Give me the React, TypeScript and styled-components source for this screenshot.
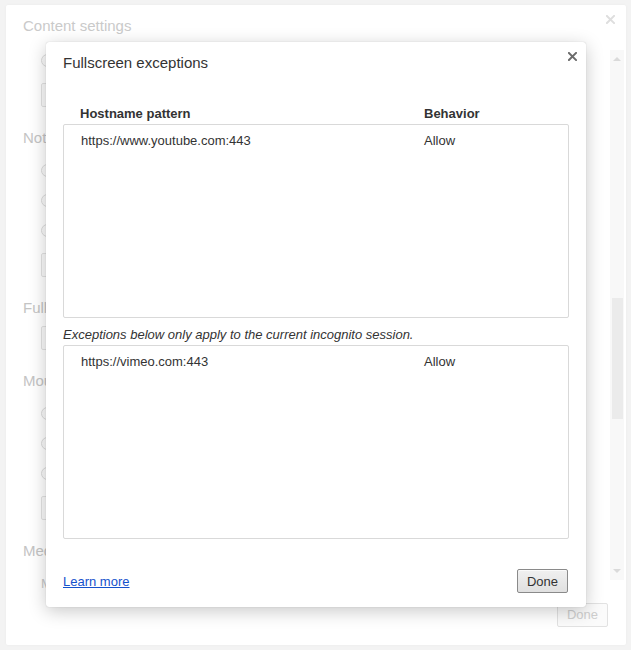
import React from "react";
import styled, { createGlobalStyle } from "styled-components";

const GlobalStyle = createGlobalStyle`
    html, body {
        margin: 0;
        padding: 0;
        background: #f2f2f2;
        font-family: "Liberation Sans", Arial, sans-serif;
    }
`;

// the settings page behind the dialog: only its left edge shows
type Section = {
    title: string;
    radios?: number;
    button?: boolean;
    line?: string;
};

const sections: Section[] = [
    { title: "Notifications", radios: 3, button: true },
    { title: "Fullscreen", button: true },
    { title: "Mouse cursor", radios: 3, button: true },
    { title: "Media", line: "Microphone:" },
];

const exceptions = [{ host: "https://www.youtube.com:443", behavior: "Allow" }];
const incognito = [{ host: "https://vimeo.com:443", behavior: "Allow" }];

function CloseIcon({ color, size }: { color: string; size: number }) {
    return (
        <svg
            width={size}
            height={size}
            viewBox="0 0 10 10"
            style={{ display: "block" }}
        >
            <path
                d="M1 1 L9 9 M9 1 L1 9"
                stroke={color}
                strokeWidth="2.2"
                strokeLinecap="square"
            />
        </svg>
    );
}

function App() {
    return (
        <>
            <GlobalStyle />
            <Page>
                <OuterDialog>
                    <OuterHeader>
                        <OuterTitle>Content settings</OuterTitle>
                        <OuterClose>
                            <CloseIcon color="#dedede" size={9} />
                        </OuterClose>
                    </OuterHeader>
                    <OuterBody>
                        <Settings>
                            <RadioRow>
                                <Radio />
                            </RadioRow>
                            <GhostButton />
                            {sections.map((s) => (
                                <React.Fragment key={s.title}>
                                    <SectionTitle>{s.title}</SectionTitle>
                                    {Array.from({ length: s.radios ?? 0 }).map(
                                        (_, i) => (
                                            <RadioRow key={i}>
                                                <Radio />
                                            </RadioRow>
                                        )
                                    )}
                                    {s.button && <GhostButton />}
                                    {s.line && <FadedLine>{s.line}</FadedLine>}
                                </React.Fragment>
                            ))}
                        </Settings>
                        <Spacer />
                        <Scrollbar>
                            <Arrow $up />
                            <Track>
                                <Thumb />
                            </Track>
                            <Arrow />
                        </Scrollbar>
                    </OuterBody>
                    <OuterFooter>
                        <DisabledButton>Done</DisabledButton>
                    </OuterFooter>
                </OuterDialog>

                <Modal>
                    <ModalClose>
                        <CloseIcon color="#6b6b6b" size={9} />
                    </ModalClose>
                    <ModalTitle>Fullscreen exceptions</ModalTitle>
                    <HeaderRow>
                        <span>Hostname pattern</span>
                        <span>Behavior</span>
                    </HeaderRow>
                    <List>
                        {exceptions.map((e) => (
                            <ListRow key={e.host}>
                                <span>{e.host}</span>
                                <span>{e.behavior}</span>
                            </ListRow>
                        ))}
                    </List>
                    <Note>
                        Exceptions below only apply to the current incognito
                        session.
                    </Note>
                    <List $tight>
                        {incognito.map((e) => (
                            <ListRow key={e.host}>
                                <span>{e.host}</span>
                                <span>{e.behavior}</span>
                            </ListRow>
                        ))}
                    </List>
                    <ModalFooter>
                        <LearnMore href="#">Learn more</LearnMore>
                        <DoneButton>Done</DoneButton>
                    </ModalFooter>
                </Modal>
            </Page>
        </>
    );
}

const Page = styled.div`
    position: relative;
    width: 631px;
    height: 650px;
    overflow: hidden;
    box-sizing: border-box;
    padding: 5px 5px 5px 6px;
    background: #f3f3f3;
`;

const OuterDialog = styled.div`
    width: 620px;
    height: 640px;
    background: #fff;
    border-radius: 2px;
    box-shadow: 0 0 3px rgba(0, 0, 0, 0.04);
    display: flex;
    flex-direction: column;
    overflow: hidden;
`;

const OuterHeader = styled.div`
    height: 40px;
    flex: none;
    display: flex;
    align-items: center;
    justify-content: space-between;
    padding: 0 11px 0 17px;
`;

const OuterTitle = styled.div`
    font-size: 15px;
    color: #cacaca;
    margin-top: 1px;
`;

const OuterClose = styled.div`
    align-self: flex-start;
    margin-top: 10px;
`;

const OuterBody = styled.div`
    flex: 1;
    display: flex;
    min-height: 0;
`;

const Settings = styled.div`
    width: 40px;
    flex: none;
    padding-left: 17px;
    box-sizing: border-box;
    overflow: hidden;
    color: #c8c8c8;
    font-size: 13px;
    white-space: nowrap;
`;

const Spacer = styled.div`
    flex: 1;
`;

const SectionTitle = styled.div`
    font-size: 15px;
    line-height: 20px;
    margin-top: 21px;
    margin-bottom: 8px;
    color: #c4c4c4;
`;

const RadioRow = styled.div`
    height: 29px;
    display: flex;
    align-items: center;
    padding-left: 18px;
    margin-top: 1px;
`;

const Radio = styled.span`
    flex: none;
    width: 11px;
    height: 11px;
    border-radius: 50%;
    border: 1px solid #dcdcdc;
    background: #fafafa;
`;

const GhostButton = styled.div`
    margin: 8px 0 0 18px;
    width: 140px;
    height: 24px;
    box-sizing: border-box;
    border: 1px solid #e3e3e3;
    border-radius: 2px;
    background: #fafafa;
`;

const FadedLine = styled.div`
    padding-left: 18px;
    line-height: 29px;
    font-size: 13px;
    color: #c8c8c8;
`;

const Scrollbar = styled.div`
    width: 14px;
    margin: 5px 2px 13px 0;
    background: #f8f8f8;
    display: flex;
    flex-direction: column;
    align-items: center;
`;

const Arrow = styled.div<{ $up?: boolean }>`
    width: 0;
    height: 0;
    margin: 7px 0;
    border-left: 4px solid transparent;
    border-right: 4px solid transparent;
    ${(p) =>
        p.$up
            ? "border-bottom: 4px solid #dadada;"
            : "border-top: 4px solid #dadada;"}
`;

const Track = styled.div`
    flex: 1;
    width: 100%;
    display: flex;
    justify-content: center;
    padding-top: 230px;
    box-sizing: border-box;
`;

const Thumb = styled.div`
    width: 11px;
    height: 121px;
    background: #ebebeb;
`;

const OuterFooter = styled.div`
    height: 52px;
    flex: none;
    display: flex;
    justify-content: flex-end;
    align-items: flex-start;
    padding: 10px 18px 0 0;
    box-sizing: border-box;
`;

const DisabledButton = styled.div`
    width: 51px;
    height: 24px;
    box-sizing: border-box;
    border: 1px solid #e2e2e2;
    border-radius: 2px;
    background: #fbfbfb;
    color: #cfcfcf;
    font-size: 13px;
    line-height: 22px;
    text-align: center;
`;

const Modal = styled.div`
    position: absolute;
    left: 46px;
    top: 42px;
    width: 540px;
    height: 565px;
    box-sizing: border-box;
    background: #fff;
    border-radius: 3px;
    box-shadow: 0 4px 18px rgba(0, 0, 0, 0.22), 0 0 1px rgba(0, 0, 0, 0.25);
    padding: 11px 17px 14px;
    display: flex;
    flex-direction: column;
    color: #333;
`;

const ModalClose = styled.div`
    position: absolute;
    top: 10px;
    right: 9px;
`;

const ModalTitle = styled.div`
    font-size: 15px;
    line-height: 20px;
    color: #333;
`;

const HeaderRow = styled.div`
    margin-top: 32px;
    display: grid;
    grid-template-columns: 344px 1fr;
    padding-left: 17px;
    font-size: 13px;
    font-weight: bold;
    line-height: 18px;
`;

const List = styled.div<{ $tight?: boolean }>`
    margin-top: ${(p) => (p.$tight ? "2px" : "1px")};
    height: 194px;
    box-sizing: border-box;
    border: 1px solid #d9d9d9;
    border-radius: 2px;
`;

const ListRow = styled.div`
    display: grid;
    grid-template-columns: 343px 1fr;
    padding: 7px 0 0 17px;
    font-size: 13px;
    line-height: 18px;
`;

const Note = styled.div`
    margin-top: 9px;
    font-size: 13px;
    font-style: italic;
    line-height: 16px;
`;

const ModalFooter = styled.div`
    margin-top: auto;
    display: flex;
    justify-content: space-between;
    align-items: center;
    padding-right: 1px;
`;

const LearnMore = styled.a`
    font-size: 13px;
    color: #1552cc;
    text-decoration: underline;
`;

const DoneButton = styled.button`
    width: 51px;
    height: 24px;
    padding: 0;
    border: 1px solid #8a8a8a;
    border-radius: 2px;
    background: linear-gradient(#f0f0f0, #e0e0e0);
    box-shadow: inset 0 1px 0 #fafafa;
    font-family: "Liberation Sans", Arial, sans-serif;
    font-size: 13px;
    color: #333;
`;

export default App;
